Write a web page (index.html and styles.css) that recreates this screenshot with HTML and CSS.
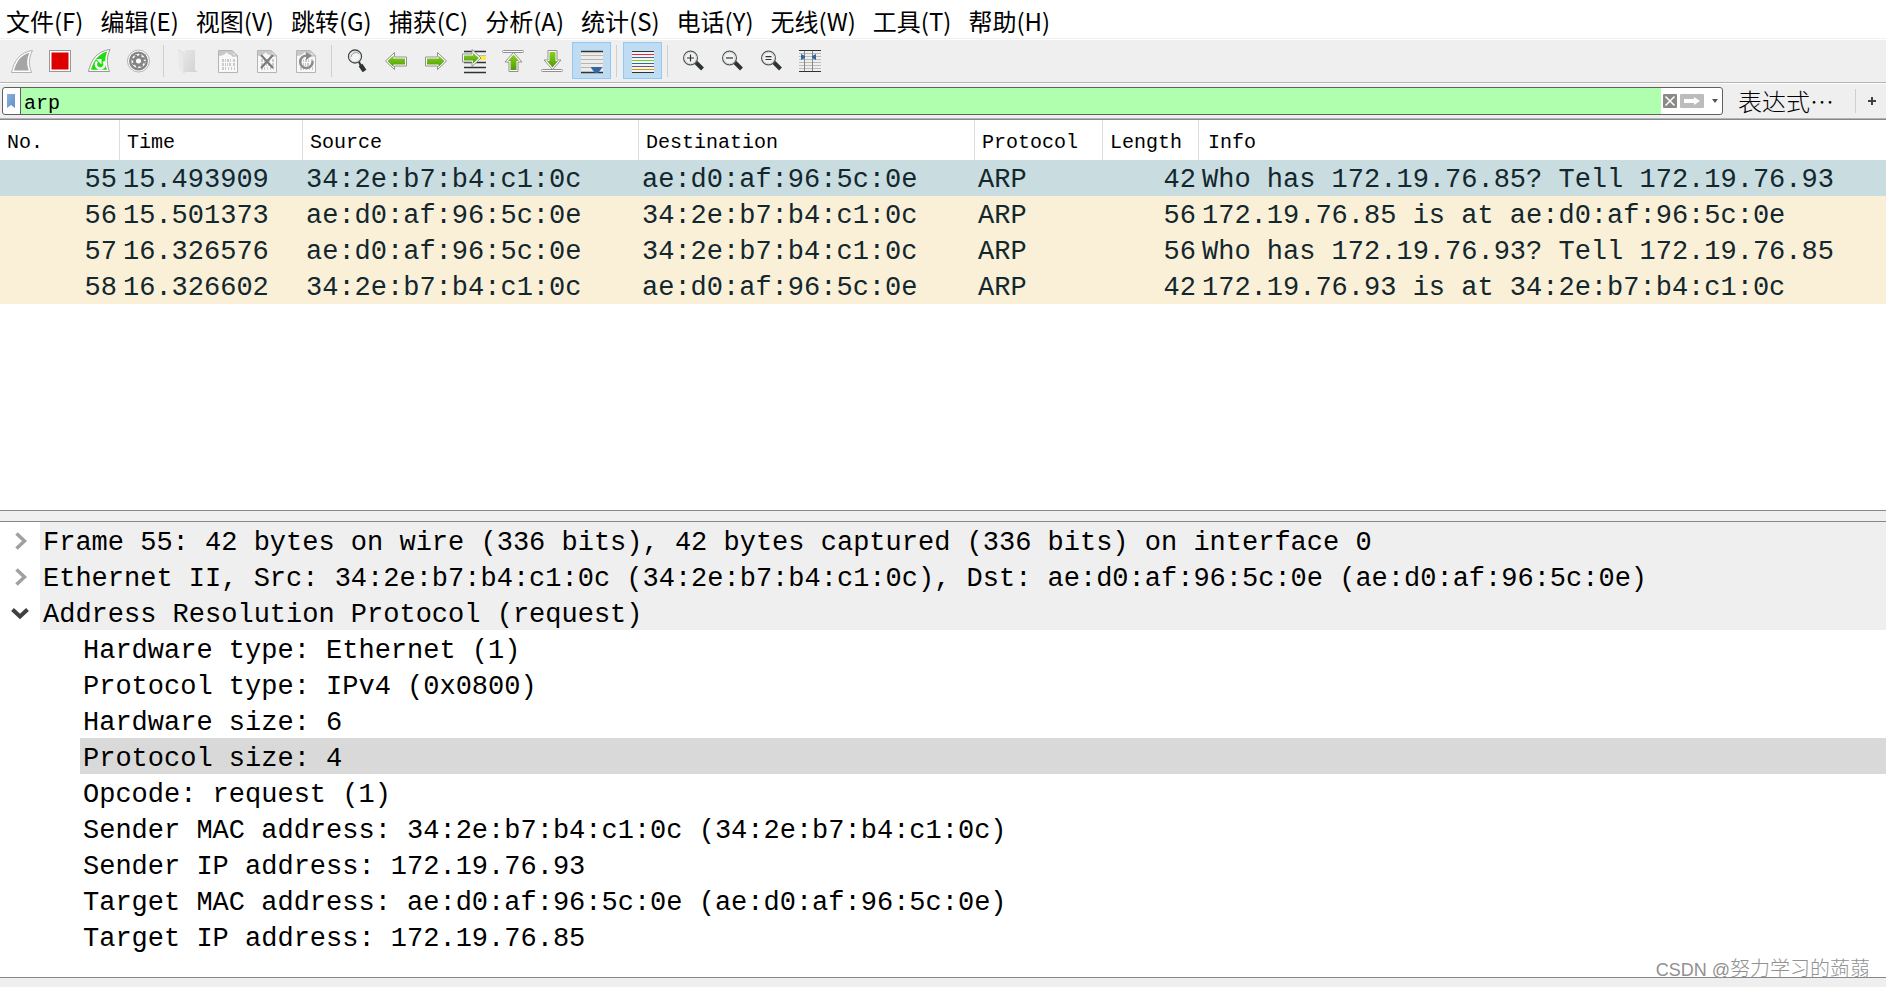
FILE: index.html
```html
<!DOCTYPE html>
<html lang="zh-CN">
<head>
<meta charset="utf-8">
<title>Wireshark</title>
<link rel="stylesheet" href="styles.css">
</head>
<body>
<svg class="defs" aria-hidden="true">
  <defs>
    <linearGradient id="green" x1="0" y1="0" x2="0" y2="1"><stop offset="0" stop-color="#8ad022"/><stop offset="1" stop-color="#4e9e08"/></linearGradient>
    <linearGradient id="blue" x1="0" y1="0" x2="1" y2="1"><stop offset="0" stop-color="#8aaedb"/><stop offset="1" stop-color="#6392c8"/></linearGradient>
    <linearGradient id="fade" x1="0" y1="0" x2="1" y2="1"><stop offset="0" stop-color="#e6e6e6"/><stop offset="1" stop-color="#d2d2d2"/></linearGradient>
    <g id="doc">
      <path d="M1.500 1.500H15L20.500 7V23.500H1.500Z" fill="#f8f8f8" stroke="#b4b4b4"/>
      <path d="M2 2H14.500V6Q11 6 9.500 3Q8.500 6 2 7Z" fill="#c8c8c8"/>
      <path d="M15 1.500V7H20.500Z" fill="#e2e2e2" stroke="#b4b4b4"/>
      <g fill="none" stroke="#cacaca" stroke-width="3"><path d="M5 11.500H18" stroke-dasharray="2 1 1 1 2 1 1 2"/><path d="M5 15.500H18" stroke-dasharray="2 1 1 1 1 1 2 2"/><path d="M5 19.500H18" stroke-dasharray="2 1 1 2 1 2 1 2"/></g>
    </g>
    <g id="lens">
      <path d="M14 13.500L20.500 20" stroke="#2e3436" stroke-width="4"/>
      <path d="M12 12L16 16" stroke="#2e3436" stroke-width="2"/>
      <circle cx="8.500" cy="9" r="6.900" fill="#f7f7f7" stroke="#555b5c" stroke-width="1.300"/>
      <circle cx="8.500" cy="9" r="5.700" fill="#f1f2f1" stroke="#d2d5d2"/>
    </g>
  </defs>
</svg>

<nav class="menubar">
  <button>文件(F)</button><button>编辑(E)</button><button>视图(V)</button><button>跳转(G)</button><button>捕获(C)</button><button>分析(A)</button><button>统计(S)</button><button>电话(Y)</button><button>无线(W)</button><button>工具(T)</button><button>帮助(H)</button>
</nav>

<div class="toolbar" role="toolbar">
  <button class="tool" aria-label="开始捕获"><svg viewBox="0 0 23 24"><path d="M1.500 23.500C4 12 10 3 22.500 1.500C18.500 9 18.500 16 21.500 23.500Z" fill="#fff" stroke="#b2b2b2"/><path d="M4 21.500C6.500 12.500 11 6 19.500 3.800C16.500 10 16.700 16 18.800 21.500Z" fill="#a5a5a5"/></svg></button>
  <button class="tool" aria-label="停止捕获"><svg viewBox="0 0 23 24"><rect x=".500" y="1.500" width="21" height="21" fill="#fff" stroke="#989898"/><rect x="2.500" y="3.500" width="17" height="17" fill="#dc0000"/></svg></button>
  <button class="tool" aria-label="重新开始捕获"><svg viewBox="0 0 23 24"><path d="M.500 22.500C3 11 9 2 22 .500C18.500 8 18.500 15 21.500 22.500Z" fill="#fff" stroke="#989898"/><path d="M3 20.800C5.500 11.500 10.500 5 19.300 2.500C16.500 9 16.700 15 19 20.800Z" fill="#1fdc0c"/><path d="M9 12.500A4.300 4.300 0 1 0 15.500 12.500" fill="none" stroke="#fff" stroke-width="2.500"/><path d="M8 10H13.500V15.500Z" fill="#fff"/></svg></button>
  <button class="tool" aria-label="捕获选项"><svg viewBox="0 0 23 24"><circle cx="11.500" cy="12" r="11" fill="#fff" stroke="#b2b2b2"/><circle cx="11.500" cy="12" r="9.500" fill="#858585"/><circle cx="11.500" cy="12" r="7.200" fill="#fff"/><circle cx="11.500" cy="12" r="4" fill="none" stroke="#858585" stroke-width="3"/><circle cx="11.500" cy="12" r="6" fill="none" stroke="#858585" stroke-width="2" stroke-dasharray="2.400 2.312"/></svg></button>
  <span class="sep"></span>
  <button class="tool" aria-label="打开"><svg viewBox="0 0 23 24"><path d="M7 1H17V21L20 23H6Z" fill="url(#fade)"/><path d="M0 0L6 4V24L1 21Z" fill="#e9e9e9"/><path d="M1 1L6 4V25" fill="none" stroke="#dcdcdc"/></svg></button>
  <button class="tool" aria-label="保存"><svg viewBox="0 0 23 24"><use href="#doc"/></svg></button>
  <button class="tool" aria-label="关闭"><svg viewBox="0 0 23 24"><use href="#doc"/><path d="M5 6L17 19M17 6L5 19" stroke="#7a7a7a" stroke-width="2.200"/></svg></button>
  <button class="tool" aria-label="重新加载"><svg viewBox="0 0 23 24"><use href="#doc"/><path d="M17.500 12A6.200 6.200 0 1 1 12 6.700" fill="none" stroke="#8a8a8a" stroke-width="2.400"/><path d="M11 3L17 6.700L11 11Z" fill="#8a8a8a"/></svg></button>
  <span class="sep"></span>
  <button class="tool" aria-label="查找"><svg viewBox="0 0 23 24"><path d="M13 13L15 17" stroke="#2e3436" stroke-width="2"/><path d="M14.500 16L18.500 22" stroke="#2e3436" stroke-width="4.500"/><circle cx="9" cy="7.500" r="6.500" fill="#f5f5f5" stroke="#3f4546" stroke-width="1.300"/><circle cx="9" cy="7.500" r="5.300" fill="none" stroke="#d5d7d5"/><path d="M5 8A5 5 0 0 1 13 4.500" fill="none" stroke="#999" stroke-width="1"/></svg></button>
  <button class="tool" aria-label="上一分组"><svg viewBox="0 0 23 24"><path d="M.500 12L9.500 3.500V8H21.500V17H9.500V20.500Z" fill="#fff" stroke="#909090" stroke-linejoin="round"/><path d="M2.500 12L8.500 6.500V9.500H20V15.500H8.500V18Z" fill="url(#green)"/></svg></button>
  <button class="tool" aria-label="下一分组"><svg viewBox="0 0 23 24"><path d="M22.500 12L13.500 3.500V8H1.500V17H13.500V20.500Z" fill="#fff" stroke="#909090" stroke-linejoin="round"/><path d="M20.500 12L14.500 6.500V9.500H3V15.500H14.500V18Z" fill="url(#green)"/></svg></button>
  <button class="tool" aria-label="转到分组"><svg viewBox="0 0 23 24"><path d="M1 2.500H23M1 7.500H23M1 13.500H23M1 18.500H23M1 23.500H23" stroke="#2e3436" stroke-width="1.500"/><path d="M14 7H23V11H14Z" fill="#fce94f"/><path d="M18 9L9 .500V5H-.500V13H9V17.500Z" fill="#fff" stroke="#909090" stroke-linejoin="round"/><path d="M16 9L10 4V6.500H1V11.500H10V14.500Z" fill="url(#green)"/></svg></button>
  <button class="tool" aria-label="首个分组"><svg viewBox="0 0 23 24"><rect x=".500" y="1.500" width="21" height="2" rx="1" fill="#fff" stroke="#909090"/><path d="M11.500 3.500L20 13H16V22.500H7V13H3Z" fill="#fff" stroke="#909090" stroke-linejoin="round"/><path d="M11.500 5.500L17 12H14.500V21H8.500V12H6Z" fill="url(#green)"/></svg></button>
  <button class="tool" aria-label="末个分组"><svg viewBox="0 0 23 24"><rect x=".500" y="20.500" width="21" height="2" rx="1" fill="#fff" stroke="#909090"/><path d="M11.500 20.500L20 11H16V1.500H7V11H3Z" fill="#fff" stroke="#909090" stroke-linejoin="round"/><path d="M11.500 18.500L17 12H14.500V3H8.500V12H6Z" fill="url(#green)"/></svg></button>
  <button class="tool on" aria-label="自动滚动"><svg viewBox="0 0 23 24"><path d="M1 2H23V24H1Z" fill="#ecedea"/><path d="M1 6.500H23M1 10.500H23M1 14.500H23M1 18.500H23" stroke="#b4b6b2"/><path d="M1 2.500H23M1 23.500H23" stroke="#2e3436" stroke-width="1.500"/><path d="M11 19Q11 18 12 18H21Q22 18 22 19L18 24H15Z" fill="#3465a4"/></svg></button>
  <span class="sep"></span>
  <button class="tool on" aria-label="着色"><svg viewBox="0 0 23 24"><path d="M1 2H23V24H1Z" fill="#f4f5f2"/><path d="M1 2.500H23M1 23.500H23" stroke="#2e3436"/><path d="M1 5.500H23" stroke="#ef2929"/><path d="M1 8.500H23" stroke="#3465a4"/><path d="M1 11.500H23" stroke="#73d216"/><path d="M1 14.500H23" stroke="#3465a4"/><path d="M1 17.500H23" stroke="#75507b"/><path d="M1 20.500H23" stroke="#c4a000"/></svg></button>
  <span class="sep"></span>
  <button class="tool" aria-label="放大"><svg viewBox="0 0 23 24"><use href="#lens"/><path d="M5 9H12M8.500 5.500V12.500" stroke="#2e3436" stroke-width="1.200"/></svg></button>
  <button class="tool" aria-label="缩小"><svg viewBox="0 0 23 24"><use href="#lens"/><path d="M5 9H12" stroke="#2e3436" stroke-width="1.200"/></svg></button>
  <button class="tool" aria-label="正常大小"><svg viewBox="0 0 23 24"><use href="#lens"/><path d="M5.500 7.700H11.500M5.500 10.500H11.500" stroke="#2e3436" stroke-width="1.200"/></svg></button>
  <button class="tool" aria-label="调整列宽"><svg viewBox="0 0 23 24"><path d="M0 4.500H22M0 7.500H22M0 10.500H22M0 13.500H22M0 16.500H22M0 19.500H22" stroke="#babdb6"/><path d="M0 1.500H22M0 22.500H22" stroke="#2e3436"/><path d="M5.500 2V22M13.500 2V22" stroke="#888a85"/><path d="M2 5L6 7V9L2 11ZM17 5L13 7V9L17 11Z" fill="#3465a4"/></svg></button>
</div>

<form class="filterbar">
  <div class="combo">
    <button type="button" class="bookmark" aria-label="书签"><svg viewBox="0 0 8 15"><path d="M0 0H8V14L4 11L0 14Z" fill="url(#blue)"/></svg></button>
    <input class="filter" type="text" value="arp" aria-label="显示过滤器">
    <button type="button" class="mini" aria-label="清除"><svg width="14" height="14" viewBox="0 0 14 14"><rect width="14" height="14" rx="1" fill="#888a85"/><path d="M2.500 2.500L11.500 11.500M11.500 2.500L2.500 11.500" stroke="#fff" stroke-width="1.500"/></svg></button>
    <button type="button" class="mini" aria-label="应用"><svg width="24" height="14" viewBox="0 0 24 14"><rect width="24" height="14" rx="1" fill="#bcbcbc"/><path d="M4 5H14V3L20 7L14 11V9H4Z" fill="#fff"/></svg></button>
    <button type="button" class="mini drop" aria-label="历史"><svg width="6" height="4" viewBox="0 0 6 4"><path d="M0 0H6L3 4Z" fill="#555"/></svg></button>
  </div>
  <button type="button" class="expr">表达式…</button>
  <button type="button" class="plus" aria-label="添加"><svg width="8" height="8" viewBox="0 0 8 8"><path d="M0 4H8M4 0V8" stroke="#404040" stroke-width="2"/></svg></button>
</form>

<main class="panes">
  <section class="packets">
    <table>
      <colgroup><col class="c-no"><col class="c-time"><col class="c-addr"><col class="c-addr"><col class="c-proto"><col class="c-len"><col></colgroup>
      <thead><tr><th>No.</th><th>Time</th><th>Source</th><th>Destination</th><th>Protocol</th><th>Length</th><th>Info</th></tr></thead>
      <tbody>
        <tr class="selected"><td class="num">55</td><td>15.493909</td><td>34:2e:b7:b4:c1:0c</td><td>ae:d0:af:96:5c:0e</td><td>ARP</td><td class="num">42</td><td>Who has 172.19.76.85? Tell 172.19.76.93</td></tr>
        <tr><td class="num">56</td><td>15.501373</td><td>ae:d0:af:96:5c:0e</td><td>34:2e:b7:b4:c1:0c</td><td>ARP</td><td class="num">56</td><td>172.19.76.85 is at ae:d0:af:96:5c:0e</td></tr>
        <tr><td class="num">57</td><td>16.326576</td><td>ae:d0:af:96:5c:0e</td><td>34:2e:b7:b4:c1:0c</td><td>ARP</td><td class="num">56</td><td>Who has 172.19.76.93? Tell 172.19.76.85</td></tr>
        <tr><td class="num">58</td><td>16.326602</td><td>34:2e:b7:b4:c1:0c</td><td>ae:d0:af:96:5c:0e</td><td>ARP</td><td class="num">42</td><td>172.19.76.93 is at 34:2e:b7:b4:c1:0c</td></tr>
      </tbody>
    </table>
  </section>
  <div class="splitter"></div>
  <section class="details">
    <ul class="tree">
      <li><div class="node"><button class="toggle" aria-label="展开"><svg viewBox="0 0 20 20"><path d="M6.500 2.500L14.500 10L6.500 17.500" fill="none" stroke="#a0a0a0" stroke-width="3.500"/></svg></button><span class="label proto">Frame 55: 42 bytes on wire (336 bits), 42 bytes captured (336 bits) on interface 0</span></div></li>
      <li><div class="node"><button class="toggle" aria-label="展开"><svg viewBox="0 0 20 20"><path d="M6.500 2.500L14.500 10L6.500 17.500" fill="none" stroke="#a0a0a0" stroke-width="3.500"/></svg></button><span class="label proto">Ethernet II, Src: 34:2e:b7:b4:c1:0c (34:2e:b7:b4:c1:0c), Dst: ae:d0:af:96:5c:0e (ae:d0:af:96:5c:0e)</span></div></li>
      <li><div class="node"><button class="toggle" aria-label="折叠"><svg viewBox="0 0 20 20"><path d="M2.500 6.500L10 13.500L17.500 6.500" fill="none" stroke="#404040" stroke-width="4"/></svg></button><span class="label proto">Address Resolution Protocol (request)</span></div>
        <ul class="fields">
          <li class="label">Hardware type: Ethernet (1)</li>
          <li class="label">Protocol type: IPv4 (0x0800)</li>
          <li class="label">Hardware size: 6</li>
          <li class="label current">Protocol size: 4</li>
          <li class="label">Opcode: request (1)</li>
          <li class="label">Sender MAC address: 34:2e:b7:b4:c1:0c (34:2e:b7:b4:c1:0c)</li>
          <li class="label">Sender IP address: 172.19.76.93</li>
          <li class="label">Target MAC address: ae:d0:af:96:5c:0e (ae:d0:af:96:5c:0e)</li>
          <li class="label">Target IP address: 172.19.76.85</li>
        </ul>
      </li>
    </ul>
  </section>
</main>
<footer class="bottom"><span class="watermark"><span class="site">CSDN @</span>努力学习的蒟蒻</span></footer>
</body>
</html>
```
FILE: styles.css
```css
* { box-sizing: border-box; }

:root {
  --chrome: #efefef;
  --line: #828790;
  --mono: "Liberation Mono", monospace;
}

body {
  margin: 0;
  min-height: 100vh;
  display: flex;
  flex-direction: column;
  background: #fff;
  color: #000;
  font-family: "Noto Sans CJK SC", sans-serif;
  overflow-x: hidden;
}

button {
  margin: 0;
  padding: 0;
  border: 0;
  background: none;
  color: inherit;
  font: inherit;
}

svg { display: block; overflow: visible; }
.defs { position: absolute; width: 0; height: 0; }

.menubar {
  display: flex;
  gap: 17px;
  height: 39px;
  padding: 3px 6px 0;
  border-bottom: 1px solid #f0f0f0;
  font-size: 24px;
  line-height: 35px;
  white-space: nowrap;
}

.toolbar {
  display: flex;
  margin-top: 1px;
  padding: 2px 2px 3px;
  background: var(--chrome);
  border-bottom: 1px solid #b4b4b4;
}
.tool {
  display: flex;
  align-items: center;
  justify-content: center;
  width: 39px;
  height: 37px;
}
.tool svg { width: 23px; height: 24px; }
.tool.on { background: #c0dcf3; border: 1px solid #90c8f6; }
.sep { width: 1px; height: 32px; margin: 3px 6px 0 5px; background: #cfcfcf; }

.filterbar {
  display: flex;
  align-items: center;
  margin-top: 1px;
  padding: 3px 0 4px 2px;
  background: var(--chrome);
  border-bottom: 1px solid var(--line);
  box-shadow: inset 0 -1px #b4b4b4;
}
.combo {
  display: flex;
  flex: 1;
  align-items: center;
  height: 28px;
  border: 1px solid #606060;
  border-radius: 3px;
  background: #fff;
  overflow: hidden;
}
.bookmark { width: 18px; height: 100%; padding-left: 4px; border-right: 1px solid #606060; }
.bookmark svg { width: 8px; height: 15px; }
.filter {
  flex: 1;
  min-width: 0;
  height: 100%;
  margin-right: 2px;
  padding: 4px 3px 0;
  border: 0;
  outline: 0;
  background: #afffaf;
  font: 20px/22px var(--mono);
}
.mini { margin-right: 3px; }
.drop { margin: 0 4px 0 5px; }
.expr { margin: 0 21px 0 15px; font-size: 24px; font-weight: 300; line-height: 28px; }
.plus { height: 24px; padding: 0 10px 0 12px; border-left: 1px solid #cfcfcf; }

.panes { flex: 1; display: flex; flex-direction: column; }
.packets { flex: 390 1 0; }
.splitter {
  height: 12px;
  background: var(--chrome);
  border: solid var(--line);
  border-width: 1px 0;
}
.details { flex: 455 1 0; }

table { width: 100%; table-layout: fixed; border-collapse: separate; border-spacing: 0; }
.c-no { width: 120px; }
.c-time { width: 183px; }
.c-addr { width: 336px; }
.c-proto { width: 128px; }
.c-len { width: 96px; }
th {
  height: 40px;
  padding: 6px 7px 0;
  border-right: 1px solid #dedede;
  font: 20px/24px var(--mono);
  text-align: left;
}
th:last-child { padding-left: 9px; border-right: 0; }
td {
  height: 36px;
  padding: 4px 3px 0;
  color: #12272e;
  background: #faf0d7;
  font: 27px/32px var(--mono);
  white-space: nowrap;
}
.selected td { background: #c9dce0; }
.num { text-align: right; }

ul { margin: 0; padding: 0; list-style: none; }
.node { display: flex; }
.toggle { width: 40px; padding: 2px 0 0 10px; }
.toggle svg { width: 20px; height: 20px; }
.label {
  height: 36px;
  padding: 6px 0 0 3px;
  font: 27px/30px var(--mono);
  white-space: nowrap;
}
.proto { flex: 1; background: var(--chrome); }
.fields { padding-left: 80px; }
.current { background: #d9d9d9; }

.bottom {
  position: relative;
  height: 10px;
  background: var(--chrome);
  border-top: 1px solid var(--line);
}
.watermark {
  position: absolute;
  right: 16px;
  bottom: 3px;
  color: #919191;
  font: 300 20px/28px "Liberation Sans", "Noto Sans CJK SC", sans-serif;
}
.site { font-size: 18px; }
```
